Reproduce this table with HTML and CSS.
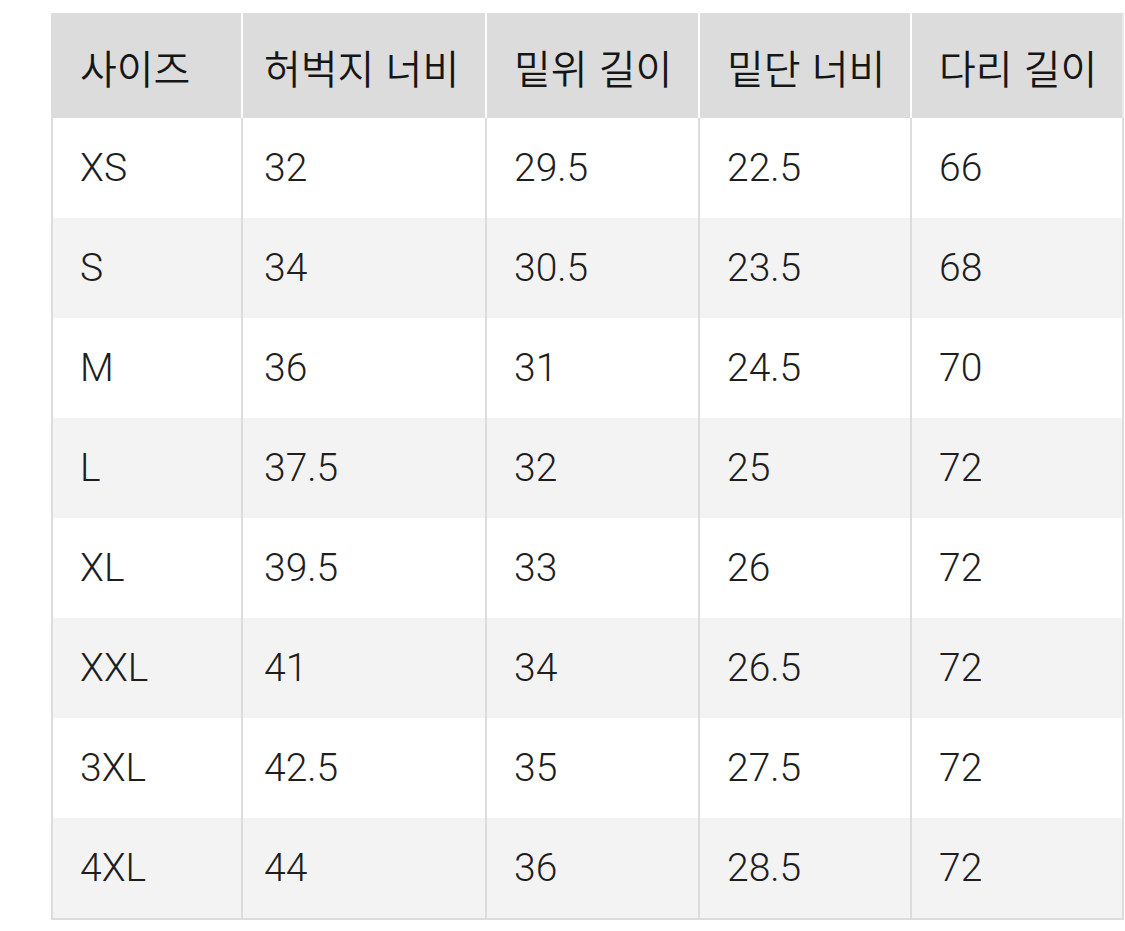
FILE: index.html
```html
<!DOCTYPE html>
<html lang="ko">
<head>
<meta charset="utf-8">
<link rel="stylesheet" href="styles.css">
</head>
<body>
<div class="size-table">
  <div class="cell head">사이즈</div>
  <div class="cell head">허벅지 너비</div>
  <div class="cell head">밑위 길이</div>
  <div class="cell head">밑단 너비</div>
  <div class="cell head">다리 길이</div>

  <div class="cell">XS</div><div class="cell">32</div><div class="cell">29.5</div><div class="cell">22.5</div><div class="cell">66</div>
  <div class="cell alt">S</div><div class="cell alt">34</div><div class="cell alt">30.5</div><div class="cell alt">23.5</div><div class="cell alt">68</div>
  <div class="cell">M</div><div class="cell">36</div><div class="cell">31</div><div class="cell">24.5</div><div class="cell">70</div>
  <div class="cell alt">L</div><div class="cell alt">37.5</div><div class="cell alt">32</div><div class="cell alt">25</div><div class="cell alt">72</div>
  <div class="cell">XL</div><div class="cell">39.5</div><div class="cell">33</div><div class="cell">26</div><div class="cell">72</div>
  <div class="cell alt">XXL</div><div class="cell alt">41</div><div class="cell alt">34</div><div class="cell alt">26.5</div><div class="cell alt">72</div>
  <div class="cell">3XL</div><div class="cell">42.5</div><div class="cell">35</div><div class="cell">27.5</div><div class="cell">72</div>
  <div class="cell alt">4XL</div><div class="cell alt">44</div><div class="cell alt">36</div><div class="cell alt">28.5</div><div class="cell alt">72</div>
</div>
</body>
</html>
```

FILE: styles.css
```css
html, body {
  margin: 0;
  padding: 0;
  background: #ffffff;
}

body {
  padding: 13px 0 0 51px;
  font-family: Roboto, "Noto Sans CJK KR", sans-serif;
  color: #1e1e1e;
}

.size-table {
  display: grid;
  grid-template-columns: 190px 244px 213px 212px 212px;
  grid-template-rows: 105px repeat(8, 100px);
  width: 1071px;
  border-left: 2px solid #dcdcdc;
  border-bottom: 2px solid #dcdcdc;
}

.cell {
  box-sizing: border-box;
  display: flex;
  align-items: center;
  padding-left: 27px;
  border-right: 2px solid #dcdcdc;
  background: #ffffff;
  font-size: 39px;
  font-weight: 300;
  line-height: 1;
  white-space: nowrap;
}

.cell:nth-child(5n+2) {
  padding-left: 21px;
}

.cell.alt {
  background: #f3f3f3;
}

.cell.head {
  background: #dcdcdc;
  border-right-color: #ffffff;
  font-family: "Noto Sans CJK KR", sans-serif;
  font-size: 40px;
  font-weight: 350;
  padding-top: 2px;
  color: #161616;
}

.cell.head:nth-child(5) {
  border-right-color: #e8e8e8;
}
```
